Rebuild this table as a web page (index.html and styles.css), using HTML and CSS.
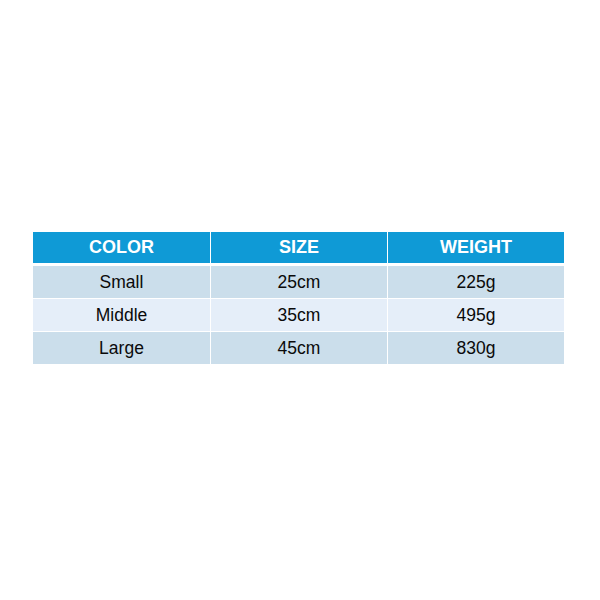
FILE: index.html
```html
<!DOCTYPE html>
<html>
<head>
<meta charset="utf-8">
<link rel="stylesheet" href="styles.css">
</head>
<body>
<div class="spec">
  <div class="row head">
    <div class="cell">COLOR</div>
    <div class="cell">SIZE</div>
    <div class="cell">WEIGHT</div>
  </div>
  <div class="row dark">
    <div class="cell">Small</div>
    <div class="cell">25cm</div>
    <div class="cell">225g</div>
  </div>
  <div class="row light">
    <div class="cell">Middle</div>
    <div class="cell">35cm</div>
    <div class="cell">495g</div>
  </div>
  <div class="row dark">
    <div class="cell">Large</div>
    <div class="cell">45cm</div>
    <div class="cell">830g</div>
  </div>
</div>
</body>
</html>
```
FILE: styles.css
```css
html, body {
  margin: 0;
  padding: 0;
  background: #ffffff;
}
body {
  font-family: "Liberation Sans", Arial, sans-serif;
}
.spec {
  width: 531px;
  margin: 232px 0 0 33px;
  display: flex;
  flex-direction: column;
  gap: 1px;
}
.row {
  display: grid;
  grid-template-columns: 177px 176px 176px;
  column-gap: 1px;
  height: 32px;
}
.cell {
  display: flex;
  align-items: center;
  justify-content: center;
  font-size: 17.5px;
  color: #0a0a0a;
}
.head {
  height: 31px;
  margin-bottom: 2px;
}
.head .cell {
  background: #0f9ad6;
  color: #ffffff;
  font-weight: bold;
  font-size: 18px;
}
.dark .cell {
  background: #cbdeeb;
}
.light .cell {
  background: #e5eef9;
}
```
